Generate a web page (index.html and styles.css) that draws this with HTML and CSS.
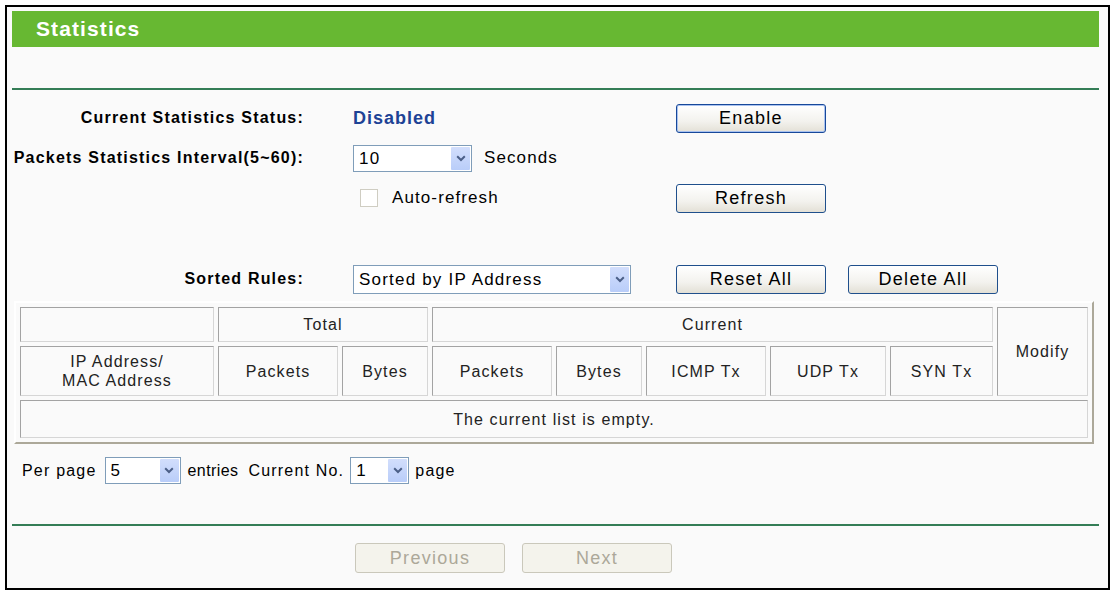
FILE: index.html
```html
<!doctype html>
<html lang="en">

<head>
    <meta charset="UTF-8">
    <meta name="viewport" content="width=device-width, initial-scale=1.0">
    <title>Statistics</title>
    <link rel="stylesheet" href="styles.css">
</head>

<body>
    <div class="frame">
        <div class="title-bar">Statistics</div>
        <hr class="rule rule-top">

        <div class="form">
            <div class="lbl">Current Statistics Status:</div>
            <div class="val"><span class="status">Disabled</span></div>
            <div class="act"><button class="btn btn-default">Enable</button></div>

            <div class="lbl">Packets Statistics Interval(5~60):</div>
            <div class="val">
                <span class="sel sel-interval">
                    <select>
                        <option>10</option>
                        <option>20</option>
                        <option>30</option>
                        <option>60</option>
                    </select>
                    <span class="sel-arrow"><svg viewBox="0 0 10 7" width="10" height="7"><path d="M1.2 1.3 L5 5 L8.8 1.3" fill="none" stroke="#4b5f87" stroke-width="2"/></svg></span>
                </span>
                <span class="unit">Seconds</span>
            </div>
            <div class="act"></div>

            <div class="lbl"></div>
            <div class="val">
                <label class="check"><input type="checkbox"><span>Auto-refresh</span></label>
            </div>
            <div class="act"><button class="btn">Refresh</button></div>

            <div class="gap-row"></div>

            <div class="lbl">Sorted Rules:</div>
            <div class="val">
                <span class="sel sel-sort">
                    <select>
                        <option>Sorted by IP Address</option>
                        <option>Sorted by Total Packets</option>
                        <option>Sorted by Total Bytes</option>
                    </select>
                    <span class="sel-arrow"><svg viewBox="0 0 10 7" width="10" height="7"><path d="M1.2 1.3 L5 5 L8.8 1.3" fill="none" stroke="#4b5f87" stroke-width="2"/></svg></span>
                </span>
            </div>
            <div class="act">
                <button class="btn">Reset All</button>
                <button class="btn">Delete All</button>
            </div>
        </div>

        <table class="stats">
            <colgroup>
                <col class="c-ip">
                <col class="c-wide">
                <col class="c-narrow">
                <col class="c-wide">
                <col class="c-narrow">
                <col class="c-wide">
                <col class="c-udp">
                <col class="c-syn">
                <col class="c-mod">
            </colgroup>
            <tr class="r-top">
                <th></th>
                <th colspan="2">Total</th>
                <th colspan="5">Current</th>
                <th rowspan="2">Modify</th>
            </tr>
            <tr class="r-mid">
                <th>IP Address/<br>MAC Address</th>
                <th>Packets</th>
                <th>Bytes</th>
                <th>Packets</th>
                <th>Bytes</th>
                <th>ICMP Tx</th>
                <th>UDP Tx</th>
                <th>SYN Tx</th>
            </tr>
            <tr class="r-empty">
                <td colspan="9">The current list is empty.</td>
            </tr>
        </table>

        <div class="pager">
            <span>Per page</span>
            <span class="sel sel-per">
                <select>
                    <option>5</option>
                    <option>10</option>
                    <option>15</option>
                </select>
                <span class="sel-arrow"><svg viewBox="0 0 10 7" width="10" height="7"><path d="M1.2 1.3 L5 5 L8.8 1.3" fill="none" stroke="#4b5f87" stroke-width="2"/></svg></span>
            </span>
            <span class="pg-entries">entries</span>
            <span class="pg-cur">Current No.</span>
            <span class="sel sel-page">
                <select>
                    <option>1</option>
                </select>
                <span class="sel-arrow"><svg viewBox="0 0 10 7" width="10" height="7"><path d="M1.2 1.3 L5 5 L8.8 1.3" fill="none" stroke="#4b5f87" stroke-width="2"/></svg></span>
            </span>
            <span class="pg-page">page</span>
        </div>

        <hr class="rule rule-bottom">

        <div class="nav">
            <button class="btn" disabled>Previous</button>
            <button class="btn" disabled>Next</button>
        </div>
    </div>
</body>

</html>
```

FILE: styles.css
```css
* {
    margin: 0;
    padding: 0;
    box-sizing: border-box;
}

body {
    background: #fff;
    padding: 5px;
    font-family: "Liberation Sans", Arial, sans-serif;
    font-size: 17px;
    letter-spacing: 1.1px;
    color: #000;
}

.frame {
    height: 585px;
    border: 2px solid #000;
    background: #fafafa;
}

.title-bar {
    margin: 4px 9px 0 5px;
    height: 36px;
    line-height: 36px;
    padding-left: 24px;
    background: #67b832;
    color: #fff;
    font-size: 21px;
    font-weight: bold;
    letter-spacing: 1.1px;
}

.rule {
    height: 2px;
    border: 0;
    background: #347d56;
    margin: 0 9px 0 5px;
}

.rule-top {
    margin-top: 41px;
}

.rule-bottom {
    margin-top: 40px;
}

/* form rows */
.form {
    display: grid;
    grid-template-columns: 297px 372px 1fr;
    grid-template-rows: 40px 40px 40px 41px 40px;
    margin-top: 8px;
}

.lbl {
    align-self: center;
    text-align: right;
    font-size: 16px;
    font-weight: bold;
    letter-spacing: 1.2px;
}

.val {
    display: flex;
    align-items: center;
    padding-left: 49px;
}

.act {
    display: flex;
    align-items: center;
    gap: 22px;
}

.gap-row {
    grid-column: 1 / -1;
}

.status {
    color: #1d4295;
    font-size: 18px;
    font-weight: bold;
    letter-spacing: 1px;
}

.unit {
    margin-left: 12px;
}

/* buttons */
.btn {
    width: 150px;
    height: 29px;
    border: 1px solid #1f4f8c;
    border-radius: 3px;
    background: linear-gradient(#fff, #f3f2ee 60%, #e3e0d6);
    font-family: inherit;
    font-size: 18px;
    letter-spacing: 1.3px;
    color: #000;
}

.btn-default {
    border-color: #17489a;
    box-shadow: inset 0 0 0 1px #a9c2ef;
}

.btn:disabled {
    height: 30px;
    border-color: #cac8bb;
    background: #f4f3ec;
    color: #aca899;
}

/* selects */
.sel {
    display: inline-flex;
    align-items: stretch;
    height: 27px;
    border: 1px solid #7f9db9;
    background: #fff;
}

.sel select {
    flex: 1;
    min-width: 0;
    border: 0;
    outline: 0;
    background: transparent;
    appearance: none;
    -webkit-appearance: none;
    font-family: inherit;
    font-size: 17px;
    letter-spacing: 1.2px;
    padding-left: 5px;
    color: #000;
}

.sel-arrow {
    display: flex;
    align-items: center;
    justify-content: center;
    width: 19px;
    margin: 1px;
    border-radius: 1px;
    background: linear-gradient(#d2defc, #b9cdf9);
}

.sel-interval {
    width: 119px;
}

.sel-sort {
    width: 278px;
    height: 29px;
}

.sel-per {
    width: 76px;
}

.sel-page {
    width: 59px;
}

/* checkbox */
.check {
    display: flex;
    align-items: center;
}

.check input {
    appearance: none;
    -webkit-appearance: none;
    width: 18px;
    height: 18px;
    margin: 0 14px 0 7px;
    border: 1px solid #cfcdc2;
    background: #fff;
}

/* table */
.stats {
    width: 1080px;
    margin: 2px 0 0 7px;
    table-layout: fixed;
    border-collapse: separate;
    border-spacing: 4px;
    border: 2px solid;
    border-color: #fff #aca899 #aca899 #fff;
}

.c-ip { width: 194px; }
.c-wide { width: 120px; }
.c-narrow { width: 86px; }
.c-udp { width: 116px; }
.c-syn { width: 103px; }
.c-mod { width: 91px; }

.stats th,
.stats td {
    padding: 0;
    border: 1px solid;
    border-color: #a3a3a3 #d6d6d6 #d6d6d6 #a3a3a3;
    font-size: 16px;
    font-weight: normal;
    letter-spacing: 1.1px;
    line-height: 19px;
    text-align: center;
    color: #222;
}

.r-top th {
    height: 35px;
}

.r-mid th {
    height: 50px;
}

.r-empty td {
    height: 38px;
}

/* paging */
.pager {
    display: flex;
    align-items: center;
    height: 27px;
    margin: 13px 0 0 15px;
    font-size: 16px;
    letter-spacing: 1.2px;
}

.pager .sel-per {
    margin-left: 8px;
}

.pg-entries {
    margin-left: 7px;
    letter-spacing: 0.4px;
}

.pg-cur {
    margin-left: 10px;
}

.pager .sel-page {
    margin-left: 6px;
}

.pg-page {
    margin-left: 6px;
}

.nav {
    display: flex;
    gap: 17px;
    margin: 17px 0 0 348px;
}
```
